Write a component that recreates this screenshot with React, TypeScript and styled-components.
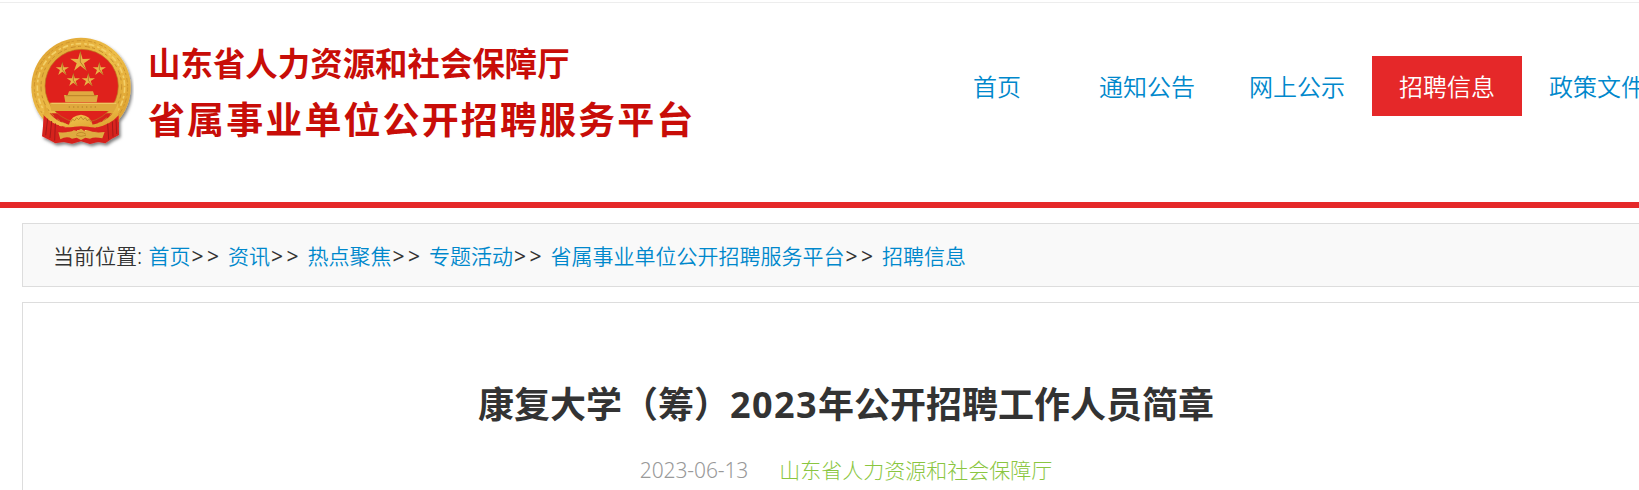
import React from "react";
import styled, { createGlobalStyle } from "styled-components";

const GlobalStyle = createGlobalStyle`
	body {
		margin: 0;
		background: #fff;
		color: #333;
		font-family: "Noto Sans", "Noto Sans CJK SC", sans-serif;
		overflow: hidden;
	}
	a {
		color: #0088cc;
		text-decoration: none;
	}
`;

const Page = styled.div`
	width: 1670px;
	height: 490px;
	overflow: hidden;
`;

const Header = styled.header`
	display: flex;
	align-items: flex-start;
	height: 199px;
	margin-top: 2px;
	border-top: 1px solid #ededed;
	border-bottom: 6px solid #e52829;
`;

const Logo = styled.div`
	display: flex;
	width: 922px;
	flex: none;
	padding: 32px 0 0 30px;
	box-sizing: border-box;
`;

const EmblemSvg = styled.svg`
	width: 104px;
	height: 116px;
	flex: none;
`;

const LogoText = styled.div`
	padding: 4px 0 0 14px;
	font-family: "Noto Sans CJK SC", sans-serif;
	font-weight: 700;
	color: #c80d08;
	white-space: nowrap;
`;

const Department = styled.div`
	font-size: 32.4px;
	line-height: 46px;
	letter-spacing: 0.05px;
`;

const Platform = styled.div`
	margin-top: 8px;
	font-size: 37px;
	line-height: 50px;
	letter-spacing: 2.1px;
`;

const Nav = styled.nav`
	display: flex;
	padding-top: 53px;
`;

const NavItem = styled.a<{ $active?: boolean }>`
	box-sizing: border-box;
	width: 150px;
	height: 60px;
	flex: none;
	padding-top: 1px;
	font-size: 24px;
	font-weight: 350;
	line-height: 60px;
	text-align: center;
	color: ${(props) => (props.$active ? "#fff" : "#0088cc")};
	background: ${(props) => (props.$active ? "#e52829" : "none")};
`;

const Breadcrumb = styled.div`
	box-sizing: border-box;
	height: 64px;
	margin: 15px 0 0 22px;
	padding: 1px 0 0 30px;
	border: 1px solid #ddd;
	background: #f9f9f9;
	font-size: 21px;
	font-weight: 350;
	line-height: 62px;
	white-space: pre;
`;

const Label = styled.span`
	display: inline-block;
	width: 95.5px;
`;

const Separator = styled.span`
	display: inline-block;
	width: 37.5px;
	padding-left: 1px;
	box-sizing: border-box;
	font-weight: 400;
	letter-spacing: 3.5px;
`;

const Article = styled.main`
	box-sizing: border-box;
	height: 400px;
	margin: 15px 0 0 22px;
	padding-top: 75px;
	border: 1px solid #ddd;
	text-align: center;
`;

const Title = styled.h1`
	margin: 0;
	font-size: 36px;
	line-height: 54px;
	font-weight: 700;
`;

const Year = styled.span`
	letter-spacing: 1.4px;
`;

const Meta = styled.div`
	display: flex;
	justify-content: center;
	gap: 31px;
	margin-top: 22px;
	font-size: 21px;
	line-height: 32px;
	font-weight: 300;
`;

const PublishDate = styled.span`
	color: #999;
	letter-spacing: -0.1px;
`;

const Source = styled.span`
	color: #8ac640;
`;

const navItems = ["首页", "通知公告", "网上公示", "招聘信息", "政策文件"];

const crumbs = [
	"首页",
	"资讯",
	"热点聚焦",
	"专题活动",
	"省属事业单位公开招聘服务平台",
	"招聘信息",
];

const stars = [
	{ x: 241, y: 186, r: 32 },
	{ x: 187, y: 208, r: 21 },
	{ x: 298, y: 208, r: 21 },
	{ x: 220, y: 241, r: 21 },
	{ x: 265, y: 241, r: 21 },
];

const starPoints = (x: number, y: number, r: number) =>
	Array.from({ length: 10 }, (_, i) => {
		const radius = i % 2 ? r * 0.36 : r;
		const angle = (Math.PI / 5) * i - Math.PI / 2;
		return `${x + radius * Math.cos(angle)},${y + radius * Math.sin(angle)}`;
	}).join(" ");

const Emblem: React.FC = () => (
	<EmblemSvg viewBox="90 105 312 348">
		<defs>
			<linearGradient id="gold" x1="0" y1="0" x2="1" y2="1">
				<stop offset="0" stopColor="#dda02f" />
				<stop offset="0.5" stopColor="#edbd48" />
				<stop offset="1" stopColor="#d99a2a" />
			</linearGradient>
			<filter id="shadow" x="-10%" y="-10%" width="130%" height="130%">
				<feDropShadow dx="5" dy="7" stdDeviation="4" floodColor="#000" floodOpacity="0.5" />
			</filter>
		</defs>
		<g filter="url(#shadow)">
			<circle cx="243" cy="262" r="149" fill="url(#gold)" />
			<path d="M133 340 L126 409 Q145 418 166 430 L190 426 L216 431 L243 424 L270 432 L294 426 L316 430 Q335 415 357 405 L356 340 Z" fill="#d5221e" />
		</g>
		{/* wheat ears */}
		<circle cx="243" cy="262" r="140" fill="none" stroke="#c28a26" strokeWidth="2" strokeDasharray="13 5 7 9" />
		<circle cx="243" cy="262" r="131" fill="none" stroke="#f3cf68" strokeWidth="5" strokeDasharray="17 9 8 6" />
		<circle cx="244" cy="260" r="121" fill="none" stroke="#c78e2b" strokeWidth="3" strokeDasharray="9 12 15 7" />
		<circle cx="245" cy="258" r="110" fill="#df211c" stroke="#b97a1f" strokeWidth="2" />
		{stars.map(({ x, y, r }) => (
			<g key={x}>
				<polygon points={starPoints(x, y, r)} fill="#e9b447" />
				<path d={`M${x} ${y - r} L${x} ${y} L${x + r * 0.55} ${y + r * 0.75}`} fill="none" stroke="#9b6418" strokeWidth="2" />
			</g>
		))}
		{/* gate tower */}
		<path d="M207 274 H279 L283 285 H294 L290 307 H196 L192 285 H203 Z" fill="#e0a940" />
		<path d="M198 287 H289" stroke="#a86e1b" strokeWidth="2" />
		<path d="M149 308 H354 L348 333 H154 Z" fill="#dfa83c" />
		<path d="M154 310 H349" stroke="#f1cb69" strokeWidth="3" />
		<path d="M206 321 H290" stroke="#c18a2c" strokeWidth="5" strokeDasharray="4 9" />
		{/* ribbon and gear */}
		<path d="M134 310 Q150 362 207 374 Q213 346 243 344 Q271 346 278 374 Q334 364 354 310 L358 365 Q292 389 243 382 Q194 390 131 357 Z" fill="url(#gold)" />
		<path d="M131 346 Q160 378 203 384 Q243 374 285 384 Q330 376 356 346 V382 Q310 401 270 393 Q243 383 215 394 Q163 397 130 378 Z" fill="#d9231e" />
		<path d="M175 397 Q208 399 222 391 L232 393 L243 386 L254 394 L263 391 Q282 400 314 396 L307 415 Q283 410 270 416 L256 413 L243 420 L230 413 L216 416 Q200 407 181 418 Z" fill="#dfab3f" />
		<path d="M229 403 Q243 391 258 403 M229 406 Q243 412 258 406" stroke="#b47b20" strokeWidth="2" fill="none" />
		<path d="M143 356 L137 406 M155 363 L150 414 M166 370 L164 422 M323 371 L326 419 M337 365 L339 410 M348 358 L350 402" stroke="#a51a18" strokeWidth="3" fill="none" />
		<path d="M211 367 L218 358 L224 362 L230 353 L236 359 L243 350 L249 359 L256 353 L261 362 L268 358 L274 367" fill="none" stroke="#a8721f" strokeWidth="2" />
	</EmblemSvg>
);

const App: React.FC = () => {
	return (
		<>
			<GlobalStyle />
			<Page>
				<Header>
					<Logo>
						<Emblem />
						<LogoText>
							<Department>山东省人力资源和社会保障厅</Department>
							<Platform>省属事业单位公开招聘服务平台</Platform>
						</LogoText>
					</Logo>
					<Nav>
						{navItems.map((item) => (
							<NavItem key={item} $active={item === "招聘信息"}>
								{item}
							</NavItem>
						))}
					</Nav>
				</Header>
				<Breadcrumb>
					<Label>当前位置:</Label>
					{crumbs.map((crumb, index) => (
						<React.Fragment key={crumb}>
							{index > 0 && <Separator>&gt;&gt;</Separator>}
							<a>{crumb}</a>
						</React.Fragment>
					))}
				</Breadcrumb>
				<Article>
					<Title>
						康复大学（筹）<Year>2023</Year>年公开招聘工作人员简章
					</Title>
					<Meta>
						<PublishDate>2023-06-13</PublishDate>
						<Source>山东省人力资源和社会保障厅</Source>
					</Meta>
				</Article>
			</Page>
		</>
	);
};

App.displayName = "App";

export default App;
